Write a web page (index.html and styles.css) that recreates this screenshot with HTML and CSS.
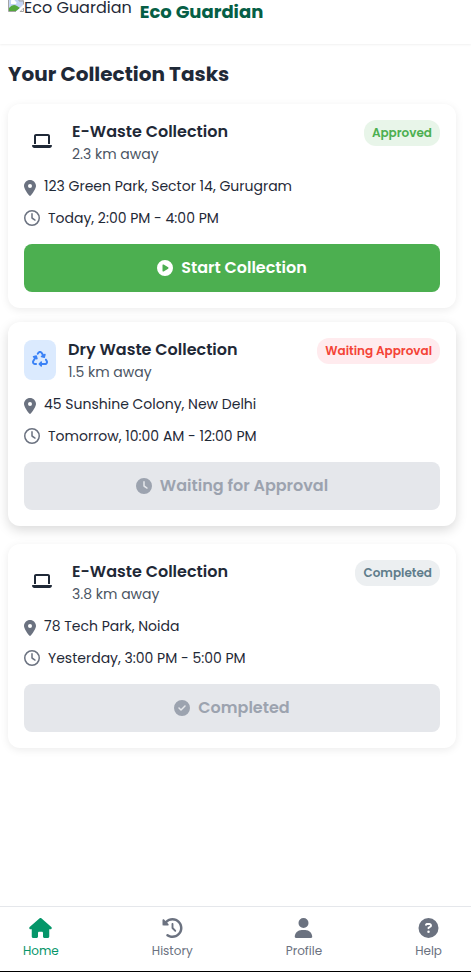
FILE: index.html
```html
<!DOCTYPE html>
<html lang="en">
<head>
<meta charset="utf-8">
<meta name="viewport" content="width=device-width, initial-scale=1">
<title>Eco Guardian</title>
<link rel="stylesheet" href="styles.css">
</head>
<body>
<svg class="sprite" aria-hidden="true">
  <symbol id="laptop" viewBox="0 0 640 512"><path d="M128 32C92.7 32 64 60.7 64 96V352h64V96H512V352h64V96c0-35.3-28.7-64-64-64H128zM19.2 384C8.6 384 0 392.6 0 403.2C0 445.6 34.4 480 76.8 480H563.2c42.4 0 76.8-34.4 76.8-76.8c0-10.6-8.6-19.2-19.2-19.2H19.2z"/></symbol>
  <symbol id="recycle" viewBox="0 0 512 512"><path d="M174.7 45.1C192.2 17 223 0 256 0s63.8 17 81.3 45.1l38.6 61.7 27-15.6c8.4-4.9 18.9-4.2 26.6 1.7s11.1 15.9 8.6 25.3l-23.4 87.4c-3.4 12.8-16.6 20.4-29.4 17l-87.4-23.4c-9.4-2.5-16.3-10.4-17.6-20s3.4-19.1 11.8-23.9l28.4-16.4L283 79c-5.8-9.3-16-15-27-15s-21.2 5.7-27 15l-17.5 28c-9.2 14.8-28.6 19.5-43.6 10.5c-15.3-9.2-20.2-29.2-10.7-44.4l17.5-28zM429.5 251.9c15-9 34.4-4.3 43.6 10.5l24.4 39.1c9.4 15.1 14.4 32.4 14.6 50.2c.3 53.1-42.7 96.4-95.8 96.4L320 448v32c0 9.7-5.8 18.5-14.8 22.2s-19.3 1.7-26.2-5.2l-64-64c-9.4-9.4-9.4-24.6 0-33.9l64-64c6.9-6.9 17.2-8.9 26.2-5.2s14.8 12.5 14.8 22.2v32l96.2 0c17.6 0 31.9-14.4 31.8-32c0-5.9-1.7-11.7-4.8-16.7l-24.4-39.1c-9.5-15.2-4.7-35.2 10.7-44.4zm-364.6-31L36 204.2c-8.4-4.9-13.1-14.3-11.8-23.9s8.2-17.5 17.6-20l87.4-23.4c12.8-3.4 26 4.2 29.4 17L182 241.2c2.5 9.4-.9 19.3-8.6 25.3s-18.2 6.6-26.6 1.7l-26.5-15.3L68.8 335.3c-3.1 5-4.8 10.8-4.8 16.7c-.1 17.6 14.2 32 31.8 32l32.2 0c17.7 0 32 14.3 32 32s-14.3 32-32 32l-32.2 0C42.7 448-.3 404.8 0 351.6c.1-17.8 5.1-35.1 14.6-50.2l50.3-80.5z"/></symbol>
  <symbol id="pin" viewBox="0 0 384 512"><path d="M215.7 499.2C267 435 384 279.4 384 192C384 86 298 0 192 0S0 86 0 192c0 87.4 117 243 168.3 307.2c12.3 15.3 35.1 15.3 47.4 0zM192 128a64 64 0 1 1 0 128 64 64 0 1 1 0-128z"/></symbol>
  <symbol id="clock" viewBox="0 0 512 512"><path d="M464 256A208 208 0 1 1 48 256a208 208 0 1 1 416 0zM0 256a256 256 0 1 0 512 0A256 256 0 1 0 0 256zM232 120V256c0 8 4 15.5 10.7 20l96 64c11 7.4 25.9 4.4 33.3-6.7s4.4-25.9-6.7-33.3L280 243.2V120c0-13.3-10.7-24-24-24s-24 10.7-24 24z"/></symbol>
  <symbol id="clock-solid" viewBox="0 0 512 512"><path d="M256 0a256 256 0 1 1 0 512A256 256 0 1 1 256 0zM232 120V256c0 8 4 15.5 10.7 20l96 64c11 7.4 25.9 4.4 33.3-6.7s4.4-25.9-6.7-33.3L280 243.2V120c0-13.3-10.7-24-24-24s-24 10.7-24 24z"/></symbol>
  <symbol id="play" viewBox="0 0 512 512"><path d="M0 256a256 256 0 1 1 512 0A256 256 0 1 1 0 256zM188.3 147.1c-7.6 4.2-12.3 12.3-12.3 20.9V344c0 8.7 4.7 16.7 12.3 20.9s16.8 4.1 24.3-.5l144-88c7.1-4.4 11.5-12.1 11.5-20.5s-4.4-16.1-11.5-20.5l-144-88c-7.4-4.5-16.7-4.7-24.3-.5z"/></symbol>
  <symbol id="check" viewBox="0 0 512 512"><path d="M256 512A256 256 0 1 0 256 0a256 256 0 1 0 0 512zM369 209L241 337c-9.4 9.4-24.6 9.4-33.9 0l-64-64c-9.4-9.4-9.4-24.6 0-33.9s24.6-9.4 33.9 0l47 47L335 175c9.4-9.4 24.6-9.4 33.9 0s9.4 24.6 0 33.9z"/></symbol>
  <symbol id="house" viewBox="0 0 576 512"><path d="M575.8 255.5c0 18-15 32.1-32 32.1h-32l.7 160.2c0 2.7-.2 5.4-.5 8.1V472c0 22.1-17.9 40-40 40H456c-1.1 0-2.2 0-3.3-.1c-1.4 .1-2.8 .1-4.2 .1H416 392c-22.1 0-40-17.9-40-40V448 384c0-17.7-14.3-32-32-32H256c-17.7 0-32 14.3-32 32v64 24c0 22.1-17.9 40-40 40H160 128.1c-1.5 0-3-.1-4.5-.2c-1.2 .1-2.4 .2-3.6 .2H104c-22.1 0-40-17.9-40-40V360c0-.9 0-1.9 .1-2.8V287.6H32c-18 0-32-14-32-32.1c0-9 3-17 10-24L266.4 8c7-7 15-8 22-8s15 2 21 7L564.8 231.5c8 7 12 15 11 24z"/></symbol>
  <symbol id="history" viewBox="0 0 512 512"><path d="M75 75L41 41C25.9 25.9 0 36.6 0 57.9V168c0 13.3 10.7 24 24 24H134.1c21.4 0 32.1-25.9 17-41l-30.8-30.8C155 85.5 203 64 256 64c106 0 192 86 192 192s-86 192-192 192c-40.8 0-78.6-12.7-109.7-34.4c-14.5-10.1-34.4-6.6-44.6 7.9s-6.6 34.4 7.9 44.6C151.2 495 201.7 512 256 512c141.4 0 256-114.6 256-256S397.4 0 256 0C185.3 0 121.3 28.7 75 75zm181 53c-13.3 0-24 10.7-24 24V256c0 6.4 2.5 12.5 7 17l72 72c9.4 9.4 24.6 9.4 33.9 0s9.4-24.6 0-33.9l-65-65V152c0-13.3-10.7-24-24-24z"/></symbol>
  <symbol id="user" viewBox="0 0 448 512"><path d="M224 256A128 128 0 1 0 224 0a128 128 0 1 0 0 256zm-45.7 48C79.8 304 0 383.8 0 482.3C0 498.7 13.3 512 29.7 512H418.3c16.4 0 29.7-13.3 29.7-29.7C448 383.8 368.2 304 269.7 304H178.3z"/></symbol>
  <symbol id="question" viewBox="0 0 512 512"><path d="M256 512A256 256 0 1 0 256 0a256 256 0 1 0 0 512zM169.8 165.3c7.9-22.3 29.1-37.3 52.8-37.3h58.3c34.9 0 63.1 28.3 63.1 63.1c0 22.6-12.1 43.5-31.7 54.8L280 264.4c-.2 13-10.9 23.6-24 23.6c-13.3 0-24-10.7-24-24V250.5c0-8.6 4.6-16.5 12.1-20.8l44.3-25.4c4.7-2.7 7.6-7.7 7.6-13.1c0-8.4-6.8-15.1-15.1-15.1H222.6c-3.4 0-6.4 2.1-7.5 5.3l-.4 1.2c-4.4 12.5-18.2 19-30.6 14.6s-19-18.2-14.6-30.6l.4-1.2zM224 352a32 32 0 1 1 64 0 32 32 0 1 1 -64 0z"/></symbol>
</svg>

<header class="topbar">
  <div class="logo">
    <svg class="logo-icon" viewBox="0 0 16 16" aria-hidden="true">
      <path fill="#c3d4f5" d="M1 1h10l4 4v5L9 15H1z"/>
      <path fill="#fff" d="M3 6a2 2 0 0 1 4-1 2 2 0 0 1 1 3H3z"/>
      <path fill="#54a83c" d="M1 15V12q4-5 8-2l3 2-4 3z"/>
      <path fill="none" stroke="#a3a3a3" d="M.5 15.500V.5H11L15.500 5V9M.5 15.500H8M11 .5V5h4.500M15.500 12v3.500H12z"/>
      <path fill="#fff" d="M16 8v3l-5 5H8z"/>
    </svg>
    <span>Eco Guardian</span>
  </div>
  <h1 class="brand">Eco Guardian</h1>
</header>

<main class="tasks">
  <h2 class="heading">Your Collection Tasks</h2>

  <article class="card">
    <div class="card-head">
      <span class="type"><svg class="i20"><use href="#laptop"/></svg></span>
      <div class="summary"><h3>E-Waste Collection</h3><p>2.3 km away</p></div>
      <span class="badge approved">Approved</span>
    </div>
    <p class="detail"><svg class="pin"><use href="#pin"/></svg>123 Green Park, Sector 14, Gurugram</p>
    <p class="detail"><svg class="clock"><use href="#clock"/></svg>Today, 2:00 PM - 4:00 PM</p>
    <button class="action" type="button"><svg><use href="#play"/></svg>Start Collection</button>
  </article>

  <article class="card raised">
    <div class="card-head">
      <span class="type dry"><svg class="i16"><use href="#recycle"/></svg></span>
      <div class="summary"><h3>Dry Waste Collection</h3><p>1.5 km away</p></div>
      <span class="badge waiting">Waiting Approval</span>
    </div>
    <p class="detail"><svg class="pin"><use href="#pin"/></svg>45 Sunshine Colony, New Delhi</p>
    <p class="detail"><svg class="clock"><use href="#clock"/></svg>Tomorrow, 10:00 AM - 12:00 PM</p>
    <button class="action" type="button" disabled><svg><use href="#clock-solid"/></svg>Waiting for Approval</button>
  </article>

  <article class="card">
    <div class="card-head">
      <span class="type"><svg class="i20"><use href="#laptop"/></svg></span>
      <div class="summary"><h3>E-Waste Collection</h3><p>3.8 km away</p></div>
      <span class="badge completed">Completed</span>
    </div>
    <p class="detail"><svg class="pin"><use href="#pin"/></svg>78 Tech Park, Noida</p>
    <p class="detail"><svg class="clock"><use href="#clock"/></svg>Yesterday, 3:00 PM - 5:00 PM</p>
    <button class="action" type="button" disabled><svg><use href="#check"/></svg>Completed</button>
  </article>
</main>

<nav class="tabs">
  <a class="active" href="#home"><svg><use href="#house"/></svg>Home</a>
  <a href="#past"><svg><use href="#history"/></svg>History</a>
  <a href="#profile"><svg><use href="#user"/></svg>Profile</a>
  <a href="#help"><svg><use href="#question"/></svg>Help</a>
</nav>
</body>
</html>
```

FILE: styles.css
```css
* {
  box-sizing: border-box;
}

body {
  margin: 0;
  min-height: 100vh;
  display: flex;
  flex-direction: column;
  background: #fff;
  color: #1f2937;
  font-family: Poppins, Inter, sans-serif;
  font-size: 16px;
  line-height: 24px;
}

h1, h2, h3, p {
  margin: 0;
}

svg {
  display: block;
  flex: none;
  fill: currentColor;
}

.sprite {
  display: none;
}

.topbar {
  display: flex;
  align-items: center;
  gap: 8px;
  height: 44px;
  padding: 0 8px 20px;
  box-shadow: 0 1px 2px rgba(0, 0, 0, 0.06);
}

.logo {
  display: flex;
  align-items: flex-start;
  height: 32px;
}

.logo-icon {
  width: 16px;
  height: 16px;
}

.brand {
  font-size: 18px;
  font-weight: 700;
  color: #065f46;
}

.tasks {
  display: flex;
  flex-direction: column;
  gap: 16px;
  padding: 16px 15px 16px 8px;
}

.heading {
  font-size: 20px;
  line-height: 28px;
  font-weight: 700;
}

.card {
  padding: 16px;
  border-radius: 12px;
  background: #fff;
  box-shadow: 0 2px 8px rgba(0, 0, 0, 0.08);
}

.raised {
  transform: translateY(-2px);
  box-shadow: 0 4px 12px rgba(0, 0, 0, 0.15);
}

.card-head {
  display: flex;
  align-items: flex-start;
  gap: 12px;
  margin-bottom: 12px;
}

.type {
  align-self: center;
  padding: 11px 8px 13px;
  border-radius: 8px;
}

.dry {
  background: #dbeafe;
  color: #3b82f6;
}

.i20 {
  width: 20px;
  height: 16px;
}

.i16 {
  width: 16px;
  height: 16px;
}

.summary {
  flex: 1;
}

.summary h3 {
  font-size: 16px;
  font-weight: 600;
}

.summary p {
  font-size: 14px;
  line-height: 20px;
  color: #4b5563;
}

.badge {
  padding: 4px 8px;
  border-radius: 12px;
  font-size: 12px;
  line-height: 18px;
  font-weight: 600;
  white-space: nowrap;
}

.approved {
  background: #e8f5e9;
  color: #4caf50;
}

.waiting {
  background: #ffebee;
  color: #f44336;
}

.completed {
  background: #eceff1;
  color: #607d8b;
}

.detail {
  display: flex;
  align-items: flex-start;
  gap: 8px;
  margin-bottom: 12px;
  font-size: 14px;
  line-height: 20px;
}

.detail svg {
  color: #6b7280;
}

.pin {
  width: 12px;
  height: 16px;
  margin-top: 4px;
}

.clock {
  width: 16px;
  height: 16px;
  margin-top: 2px;
}

.action {
  display: flex;
  align-items: center;
  justify-content: center;
  gap: 8px;
  width: 100%;
  margin-top: 16px;
  padding: 12px;
  border: 0;
  border-radius: 8px;
  background: #4caf50;
  color: #fff;
  font: inherit;
  font-weight: 600;
}

.action svg {
  width: 16px;
  height: 16px;
}

.action:disabled {
  background: #e5e7eb;
  color: #9ca3af;
}

.tabs {
  display: flex;
  justify-content: space-between;
  margin-top: auto;
  padding: 11px 29px 11px 23px;
  border-top: 1px solid #e5e7eb;
  border-bottom: 1px solid #000;
}

.tabs a {
  display: flex;
  flex-direction: column;
  align-items: center;
  gap: 4px;
  color: #6b7280;
  font-size: 12px;
  line-height: 18px;
  text-decoration: none;
}

.tabs a.active {
  color: #059669;
}

.tabs svg {
  width: 23px;
  height: 20px;
}
```
